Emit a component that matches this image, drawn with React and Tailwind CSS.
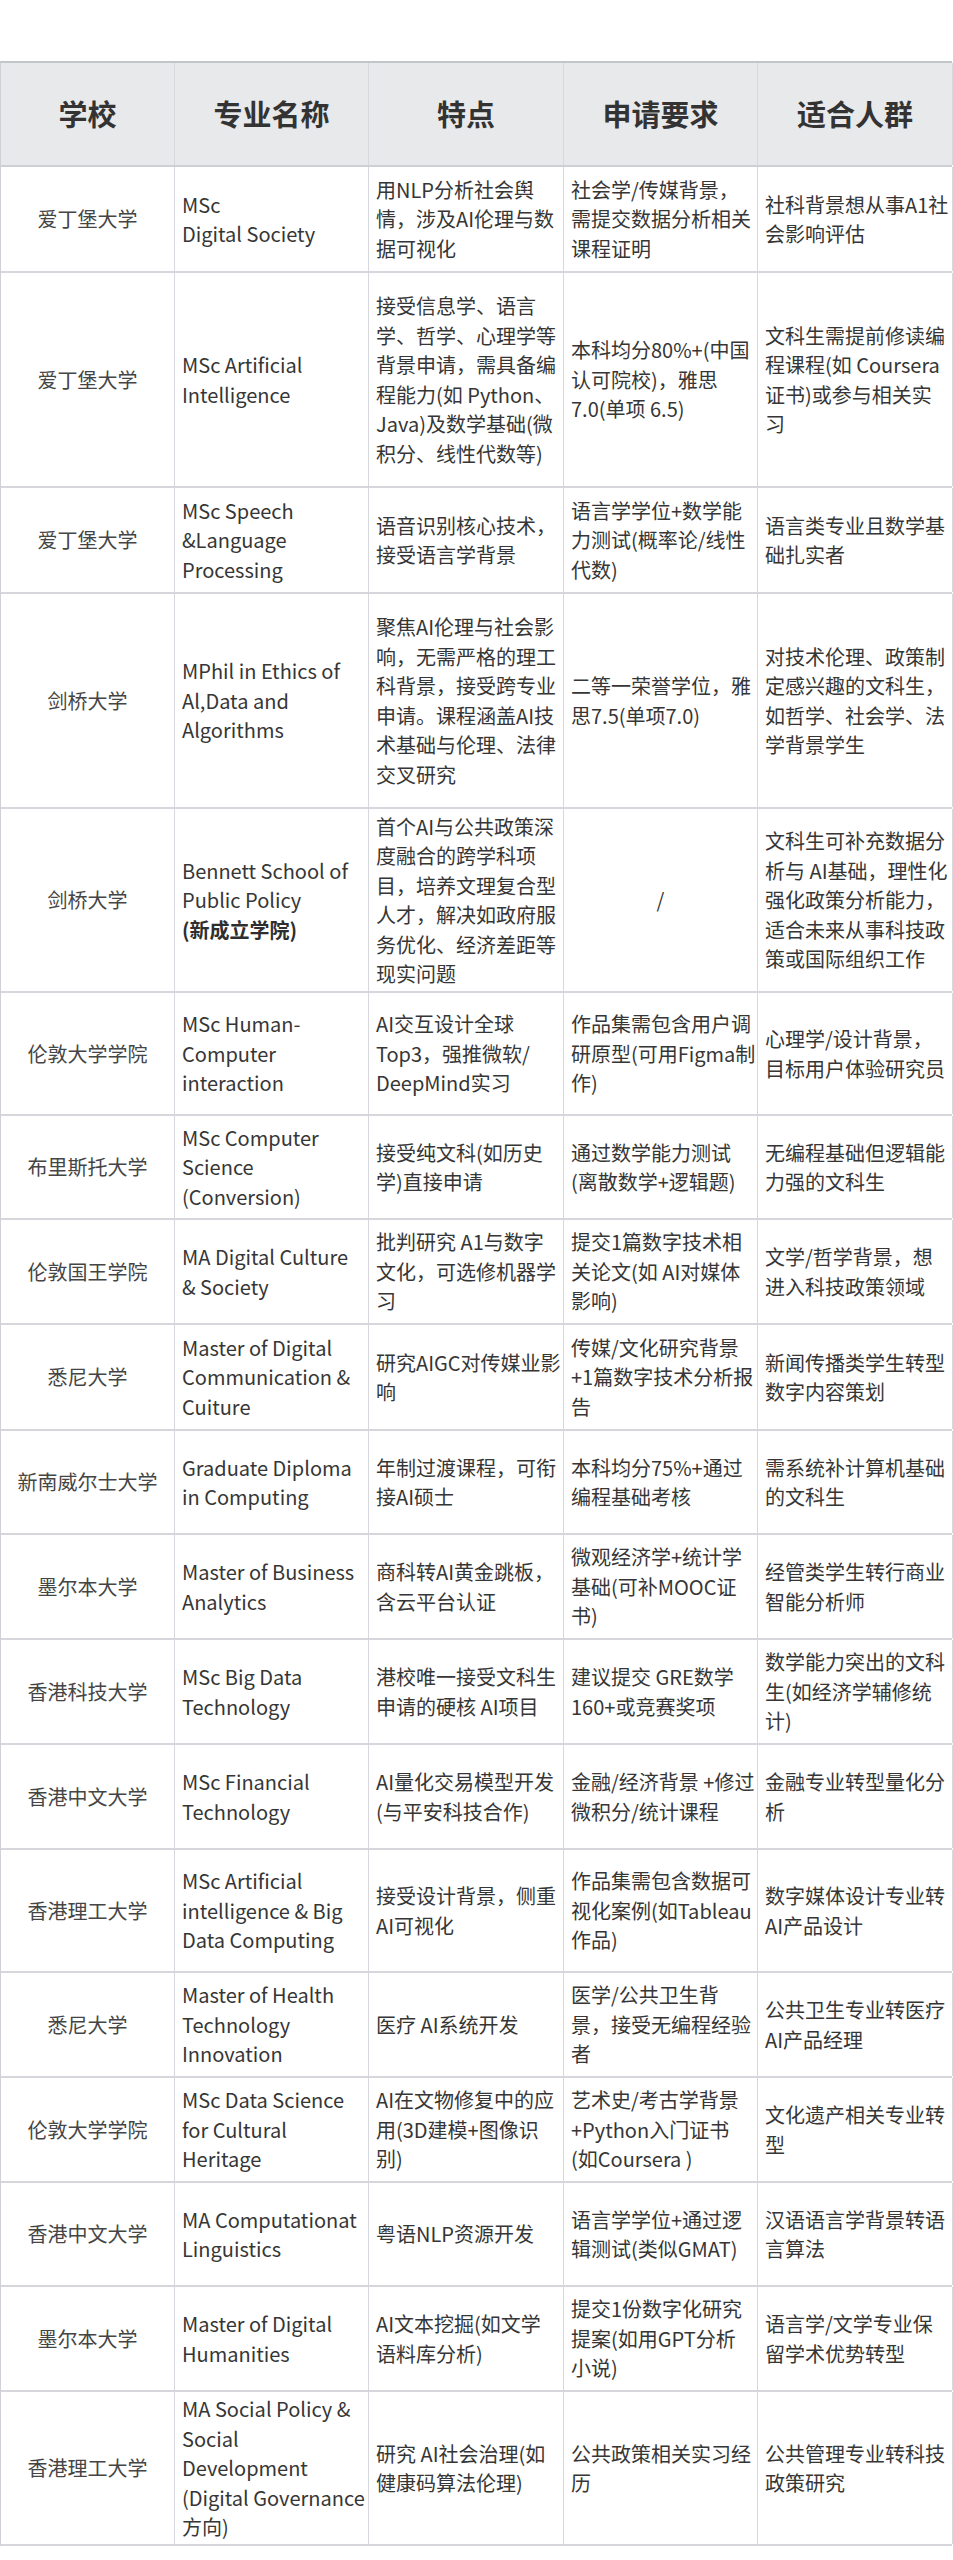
import React from "react";

const rows = [
  { h: 106, s: "爱丁堡大学", n: ["MSc", "Digital Society"], f: ["用NLP分析社会舆", "情，涉及AI伦理与数", "据可视化"], r: ["社会学/传媒背景，", "需提交数据分析相关", "课程证明"], p: ["社科背景想从事A1社", "会影响评估"] },
  { h: 215, s: "爱丁堡大学", n: ["MSc Artificial", "Intelligence"], f: ["接受信息学、语言", "学、哲学、心理学等", "背景申请，需具备编", "程能力(如 Python、", "Java)及数学基础(微", "积分、线性代数等)"], r: ["本科均分80%+(中国", "认可院校)，雅思", "7.0(单项 6.5)"], p: ["文科生需提前修读编", "程课程(如 Coursera", "证书)或参与相关实", "习"] },
  { h: 106, s: "爱丁堡大学", n: ["MSc Speech", "&Language", "Processing"], f: ["语音识别核心技术，", "接受语言学背景"], r: ["语言学学位+数学能", "力测试(概率论/线性", "代数)"], p: ["语言类专业且数学基", "础扎实者"] },
  { h: 215, s: "剑桥大学", n: ["MPhil in Ethics of", "Al,Data and", "Algorithms"], f: ["聚焦AI伦理与社会影", "响，无需严格的理工", "科背景，接受跨专业", "申请。课程涵盖AI技", "术基础与伦理、法律", "交叉研究"], r: ["二等一荣誉学位，雅", "思7.5(单项7.0)"], p: ["对技术伦理、政策制", "定感兴趣的文科生，", "如哲学、社会学、法", "学背景学生"] },
  { h: 184, s: "剑桥大学", n: ["Bennett School of", "Public Policy"], nb: "(新成立学院)", f: ["首个AI与公共政策深", "度融合的跨学科项", "目，培养文理复合型", "人才，解决如政府服", "务优化、经济差距等", "现实问题"], r: ["/"], rc: true, p: ["文科生可补充数据分", "析与 AI基础，理性化", "强化政策分析能力，", "适合未来从事科技政", "策或国际组织工作"] },
  { h: 123, s: "伦敦大学学院", n: ["MSc Human-", "Computer", "interaction"], f: ["AI交互设计全球", "Top3，强推微软/", "DeepMind实习"], r: ["作品集需包含用户调", "研原型(可用Figma制", "作)"], p: ["心理学/设计背景，", "目标用户体验研究员"] },
  { h: 104, s: "布里斯托大学", n: ["MSc Computer", "Science", "(Conversion)"], f: ["接受纯文科(如历史", "学)直接申请"], r: ["通过数学能力测试", "(离散数学+逻辑题)"], p: ["无编程基础但逻辑能", "力强的文科生"] },
  { h: 105, s: "伦敦国王学院", n: ["MA Digital Culture", "& Society"], f: ["批判研究 A1与数字", "文化，可选修机器学", "习"], r: ["提交1篇数字技术相", "关论文(如 AI对媒体", "影响)"], p: ["文学/哲学背景，想", "进入科技政策领域"] },
  { h: 106, s: "悉尼大学", n: ["Master of Digital", "Communication &", "Cuiture"], f: ["研究AIGC对传媒业影", "响"], r: ["传媒/文化研究背景", "+1篇数字技术分析报", "告"], p: ["新闻传播类学生转型", "数字内容策划"] },
  { h: 104, s: "新南威尔士大学", n: ["Graduate Diploma", "in Computing"], f: ["年制过渡课程，可衔", "接AI硕士"], r: ["本科均分75%+通过", "编程基础考核"], p: ["需系统补计算机基础", "的文科生"] },
  { h: 105, s: "墨尔本大学", n: ["Master of Business", "Analytics"], f: ["商科转AI黄金跳板，", "含云平台认证"], r: ["微观经济学+统计学", "基础(可补MOOC证", "书)"], p: ["经管类学生转行商业", "智能分析师"] },
  { h: 105, s: "香港科技大学", n: ["MSc Big Data", "Technology"], f: ["港校唯一接受文科生", "申请的硬核 AI项目"], r: ["建议提交 GRE数学", "160+或竞赛奖项"], p: ["数学能力突出的文科", "生(如经济学辅修统", "计)"] },
  { h: 105, s: "香港中文大学", n: ["MSc Financial", "Technology"], f: ["AI量化交易模型开发", "(与平安科技合作)"], r: ["金融/经济背景 +修过", "微积分/统计课程"], p: ["金融专业转型量化分", "析"] },
  { h: 123, s: "香港理工大学", n: ["MSc Artificial", "intelligence & Big", "Data Computing"], f: ["接受设计背景，侧重", "AI可视化"], r: ["作品集需包含数据可", "视化案例(如Tableau", "作品)"], p: ["数字媒体设计专业转", "AI产品设计"] },
  { h: 105, s: "悉尼大学", n: ["Master of Health", "Technology", "Innovation"], f: ["医疗 AI系统开发"], r: ["医学/公共卫生背", "景，接受无编程经验", "者"], p: ["公共卫生专业转医疗", "AI产品经理"] },
  { h: 105, s: "伦敦大学学院", n: ["MSc Data Science", "for Cultural", "Heritage"], f: ["AI在文物修复中的应", "用(3D建模+图像识", "别)"], r: ["艺术史/考古学背景", "+Python入门证书", "(如Coursera )"], p: ["文化遗产相关专业转", "型"] },
  { h: 104, s: "香港中文大学", n: ["MA Computationat", "Linguistics"], f: ["粤语NLP资源开发"], r: ["语言学学位+通过逻", "辑测试(类似GMAT)"], p: ["汉语语言学背景转语", "言算法"] },
  { h: 105, s: "墨尔本大学", n: ["Master of Digital", "Humanities"], f: ["AI文本挖掘(如文学", "语料库分析)"], r: ["提交1份数字化研究", "提案(如用GPT分析", "小说)"], p: ["语言学/文学专业保", "留学术优势转型"] },
  { h: 154, s: "香港理工大学", n: ["MA Social Policy &", "Social", "Development", "(Digital Governance", "方向)"], f: ["研究 AI社会治理(如", "健康码算法伦理)"], r: ["公共政策相关实习经", "历"], p: ["公共管理专业转科技", "政策研究"] },
];

const heights = {
  104: "h-[104px]",
  105: "h-[105px]",
  106: "h-[106px]",
  123: "h-[123px]",
  154: "h-[154px]",
  184: "h-[184px]",
  215: "h-[215px]",
};

function Lines({ lines, bold }) {
  return (
    <div className="whitespace-nowrap">
      {lines.map((l, i) => (
        <div key={i}>{l}</div>
      ))}
      {bold ? <div className="font-bold text-[#2e2e2e]">{bold}</div> : null}
    </div>
  );
}

function Cell({ className = "", children }) {
  return (
    <div className={"flex items-center border-r border-[#d7d8dd] " + className}>
      {children}
    </div>
  );
}

export default function App() {
  return (
    <div className="w-[953px] min-h-[2560px] bg-white pt-[61px] font-['Noto_Sans_CJK_SC','Noto_Sans',sans-serif] text-[20px] leading-[29.5px] text-[#363636]">
      <div className="w-[952px] border-t-2 border-l border-t-[#c3c5ca] border-l-[#cfd1d6]">
        <div className="grid h-[104px] grid-cols-[174px_194px_195px_194px_195px] border-b-2 border-[#cdd0d5] bg-[#e8e9eb] text-[29px] font-bold text-[#333333]">
          {["学校", "专业名称", "特点", "申请要求", "适合人群"].map((t) => (
            <Cell key={t} className="justify-center">
              {t}
            </Cell>
          ))}
        </div>
        {rows.map((row, i) => (
          <div
            key={i}
            className={"grid grid-cols-[174px_194px_195px_194px_195px] border-b-2 border-[#d5d7dc] " + heights[row.h]}
          >
            <Cell className="justify-center text-[#454545]">{row.s}</Cell>
            <Cell className="pl-[7px]">
              <Lines lines={row.n} bold={row.nb} />
            </Cell>
            <Cell className="pl-[7px]">
              <Lines lines={row.f} />
            </Cell>
            <Cell className={row.rc ? "justify-center" : "pl-[7px]"}>
              <Lines lines={row.r} />
            </Cell>
            <Cell className="pl-[7px]">
              <Lines lines={row.p} />
            </Cell>
          </div>
        ))}
      </div>
    </div>
  );
}
